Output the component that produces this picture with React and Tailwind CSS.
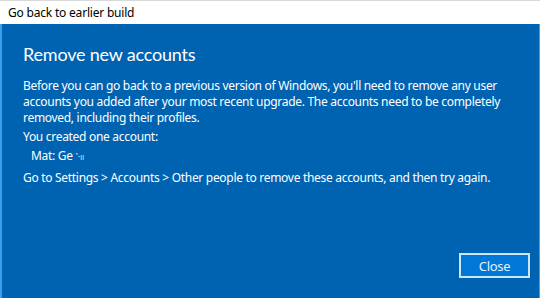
export default function App() {
  return (
    <div className="w-[540px] h-[298px] flex flex-col overflow-hidden bg-[#0063b1] font-['Noto_Sans',sans-serif]">
      {/* title bar */}
      <div className="h-[24px] shrink-0 bg-white border-t border-[#d9d9d9] flex items-center pl-[8px] text-[12px] tracking-[-0.2px] text-black">
        Go back to earlier build
      </div>

      <div className="flex-1 flex flex-col border-l-2 border-r border-[#3c9ee6] pl-[21px] pr-[8px] text-white text-[12px] leading-[16px] tracking-[-0.3px]">
        <h1 className="text-[18px] leading-[26px] mt-[17px] font-normal tracking-[-0.2px] font-['Lato',sans-serif]">Remove new accounts</h1>

        <p className="mt-[11px] w-[490px]">
          Before you can go back to a previous version of Windows, you'll need to remove any user
          accounts you added after your most recent upgrade. The accounts need to be completely
          removed, including their profiles.
        </p>
        <p className="mt-[3px]">You created one account:</p>
        <p className="mt-[3px] pl-[8px]">
          Mat:  Ge <span className="text-[9px] opacity-75">˟·ıı</span>
        </p>
        <p className="mt-[5px]">
          Go to Settings &gt; Accounts &gt; Other people to remove these accounts, and then try again.
        </p>

        <div className="flex-1" />
        <div className="flex justify-end pb-[20px] pr-[1px]">
          <button className="w-[71px] h-[25px] bg-[#0078d7] border-2 border-[#cde6f7] text-[13px] text-[#e6f2fb] flex items-center justify-center">
            Close
          </button>
        </div>
      </div>
    </div>
  );
}
